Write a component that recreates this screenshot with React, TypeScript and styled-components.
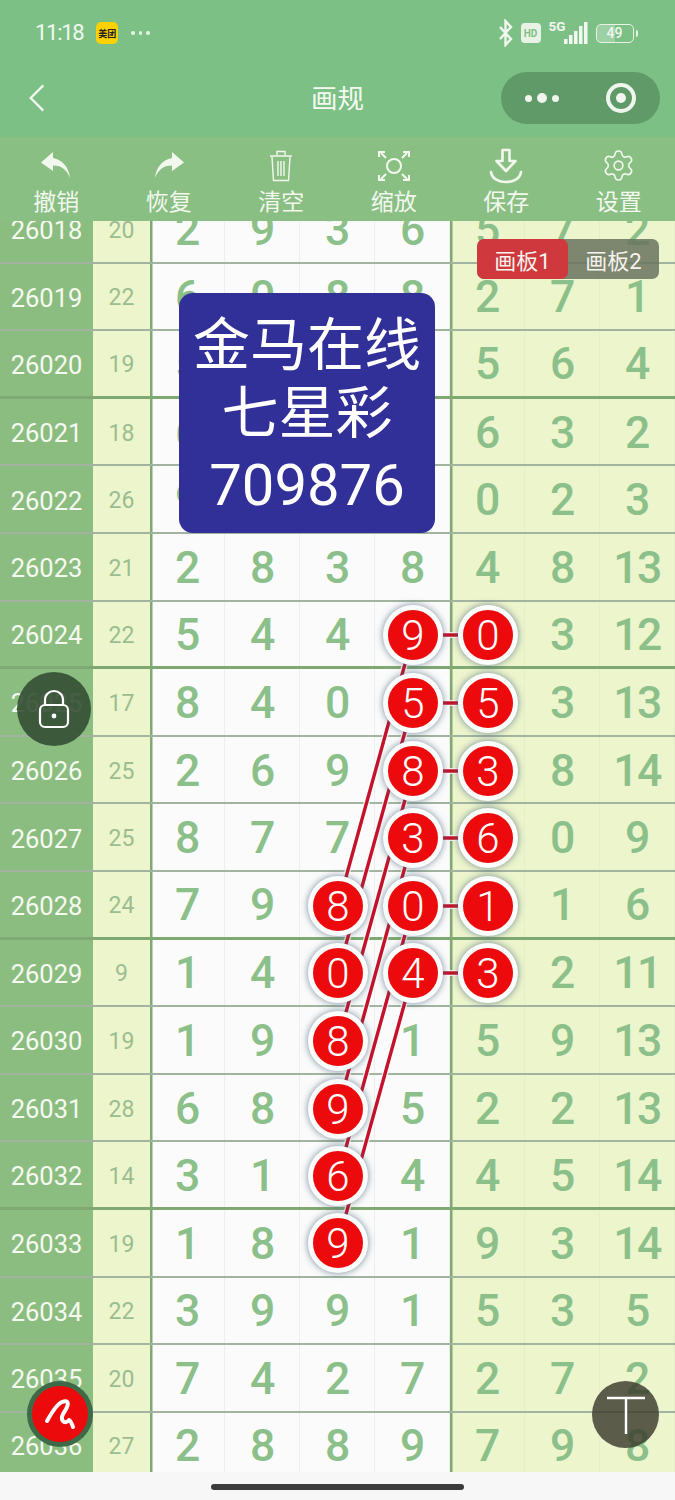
import styled, { createGlobalStyle } from "styled-components";
import { Settings } from "lucide-react";

type Mark = { x: number; y: number; value: number };

const rows: [number, number, (number | string)[]][] = [
  [26018, 20, [2, 9, 3, 6, 5, 7, 2]],
  [26019, 22, [6, 0, 8, 8, 2, 7, 1]],
  [26020, 19, [5, 3, 1, 7, 5, 6, 4]],
  [26021, 18, [6, 2, 4, 0, 6, 3, 2]],
  [26022, 26, [9, 7, 2, 5, 0, 2, 3]],
  [26023, 21, [2, 8, 3, 8, 4, 8, 13]],
  [26024, 22, [5, 4, 4, 9, 0, 3, 12]],
  [26025, 17, [8, 4, 0, 5, 5, 3, 13]],
  [26026, 25, [2, 6, 9, 8, 3, 8, 14]],
  [26027, 25, [8, 7, 7, 3, 6, 0, 9]],
  [26028, 24, [7, 9, 8, 0, 1, 1, 6]],
  [26029, 9, [1, 4, 0, 4, 3, 2, 11]],
  [26030, 19, [1, 9, 8, 1, 5, 9, 13]],
  [26031, 28, [6, 8, 9, 5, 2, 2, 13]],
  [26032, 14, [3, 1, 6, 4, 4, 5, 14]],
  [26033, 19, [1, 8, 9, 1, 9, 3, 14]],
  [26034, 22, [3, 9, 9, 1, 5, 3, 5]],
  [26035, 20, [7, 4, 2, 7, 2, 7, 2]],
  [26036, 27, [2, 8, 8, 9, 7, 9, 8]],
];

const marks: Mark[] = [
  { x: 413, y: 635, value: 9 },
  { x: 488, y: 635, value: 0 },
  { x: 413, y: 703, value: 5 },
  { x: 488, y: 703, value: 5 },
  { x: 413, y: 771, value: 8 },
  { x: 488, y: 771, value: 3 },
  { x: 413, y: 838, value: 3 },
  { x: 488, y: 838, value: 6 },
  { x: 338, y: 906, value: 8 },
  { x: 413, y: 906, value: 0 },
  { x: 488, y: 906, value: 1 },
  { x: 338, y: 973, value: 0 },
  { x: 413, y: 973, value: 4 },
  { x: 488, y: 973, value: 3 },
  { x: 338, y: 1041, value: 8 },
  { x: 338, y: 1109, value: 9 },
  { x: 338, y: 1176, value: 6 },
  { x: 338, y: 1243, value: 9 },
];

// joins between marks: slanted ones first, then the short ones across a row
const links = [
  [413, 635, 338, 906],
  [413, 703, 338, 973],
  [413, 771, 338, 1041],
  [413, 838, 338, 1109],
  [413, 906, 338, 1176],
  [413, 973, 338, 1243],
  [413, 635, 488, 635],
  [413, 703, 488, 703],
  [413, 771, 488, 771],
  [413, 838, 488, 838],
  [413, 906, 488, 906],
  [413, 973, 488, 973],
];

const tools = ["撤销", "恢复", "清空", "缩放", "保存", "设置"];

const ToolGlyph = ({ name }: { name: string }) => {
  switch (name) {
    case "撤销":
      return (
        <ToolSvg viewBox="0 0 36 36">
          <path
            d="M15 4 3 14.500 15 23v-5.500c7 0 13 2.500 17 12.500-1-10-7-18-17-20z"
            fill="currentColor"
            stroke="none"
          />
        </ToolSvg>
      );
    case "恢复":
      return (
        <ToolSvg viewBox="0 0 36 36">
          <path
            d="M21 4l12 10.500L21 23v-5.500C14 17.500 8 20 4 30c1-10 7-18 17-20z"
            fill="currentColor"
            stroke="none"
          />
        </ToolSvg>
      );
    case "清空":
      return (
        <ToolSvg viewBox="0 0 36 36" $thin>
          <path d="M7 8h22M14 7V3.500h8V7M9 9l1.500 23.500h15L27 9M15 13v15M18 13v15M21 13v15" />
        </ToolSvg>
      );
    case "缩放":
      return (
        <ToolSvg viewBox="0 0 36 36">
          <circle cx="18" cy="18" r="7" />
          <path d="M3 9V4h6M27 4h6v5M3 27v5h6M27 32h6v-5M5 5l5 5M31 5l-5 5M5 31l5-5M31 31l-5-5" />
        </ToolSvg>
      );
    case "保存":
      return (
        <ToolSvg viewBox="0 0 36 36">
          <path
            d="M14.500 2h7v11h6L18 23 8.500 13h6zM3 24c1 7 8 10 15 10s14-3 15-10"
            strokeLinecap="round"
            strokeLinejoin="round"
            strokeWidth="2.600"
          />
        </ToolSvg>
      );
    default:
      return <Settings size={35} strokeWidth={1.1} />;
  }
};

const App = () => (
  <Page>
    <GlobalStyle />
    <StatusBar>
      <StatusLeft>
        <Time>11:18</Time>
        <AppBadge>美团</AppBadge>
        <MoreDots>
          <i />
          <i />
          <i />
        </MoreDots>
      </StatusLeft>
      <StatusRight>
        <StatusSvg width="16" height="28" viewBox="0 0 16 28">
          <path d="M2 8l11 12-5.500 6V2L13 8 2 20" fill="none" stroke="#f1f8ef" strokeWidth="2.400" />
        </StatusSvg>
        <HdBadge>HD</HdBadge>
        <Network>
          <NetworkLabel>5G</NetworkLabel>
          <StatusSvg width="24" height="24" viewBox="0 0 24 24">
            <path d="M0 18h3.500v5H0zM5 14h3.500v9H5zM10 10h3.500v13H10zM15 5h3.500v18H15zM20 1h3.500v22H20z" fill="#f1f8ef" />
          </StatusSvg>
        </Network>
        <Battery>49</Battery>
        <BatteryTip />
      </StatusRight>
    </StatusBar>

    <NavBar>
      <BackButton viewBox="0 0 20 34" aria-hidden="true">
        <path d="M17 3 3 17l14 14" />
      </BackButton>
      <NavTitle>画规</NavTitle>
      <Capsule>
        <CapsuleDots>
          <Dot $size={7} />
          <Dot $size={10} />
          <Dot $size={7} />
        </CapsuleDots>
        <CapsuleTarget />
      </Capsule>
    </NavBar>

    <Toolbar>
      {tools.map((label) => (
        <Tool key={label}>
          <ToolIcon>
            <ToolGlyph name={label} />
          </ToolIcon>
          <ToolLabel>{label}</ToolLabel>
        </Tool>
      ))}
    </Toolbar>

    <Board>
      <Table>
        {rows.map(([id, sum, cells]) => {
          const heavy = (id - 26020) % 4 === 0;
          return (
            <Row key={id} $heavy={heavy}>
              <IdCell>{id}</IdCell>
              <SumCell>{sum}</SumCell>
              <Group>
                {cells.slice(0, 4).map((value, i) => (
                  <Digit key={i}>{value}</Digit>
                ))}
              </Group>
              <Group $tinted>
                {cells.slice(4).map((value, i) => (
                  <Digit key={i}>{value}</Digit>
                ))}
              </Group>
            </Row>
          );
        })}
      </Table>
    </Board>

    <HomeBar>
      <HomeHandle />
    </HomeBar>

    <Links viewBox="0 0 675 1500" aria-hidden="true">
      {links.map(([x1, y1, x2, y2], i) => (
        <g key={i}>
          <line x1={x1} y1={y1} x2={x2} y2={y2} stroke="#ffffff" strokeOpacity="0.8" strokeWidth="6" />
          <line x1={x1} y1={y1} x2={x2} y2={y2} stroke="#c4122a" strokeWidth="3.400" />
        </g>
      ))}
    </Links>
    {marks.map((mark, i) => (
      <MarkBall key={i} style={{ left: mark.x - 30, top: mark.y - 30 }}>
        {mark.value}
      </MarkBall>
    ))}

    <BoardTabs>
      <BoardTab $active>画板1</BoardTab>
      <BoardTab>画板2</BoardTab>
    </BoardTabs>

    <InfoCard>
      <div>金马在线</div>
      <div>七星彩</div>
      <InfoNumber>709876</InfoNumber>
    </InfoCard>

    <LockButton>
      <svg width="32" height="40" viewBox="0 0 32 40" fill="none" stroke="#fff" strokeWidth="2.200">
        <path d="M7 17V11C7 5.500 11 2 16 2s9 3.500 9 9v6" />
        <rect x="2" y="16" width="28" height="22" rx="5" />
        <circle cx="16" cy="27" r="2.400" fill="#fff" stroke="none" />
      </svg>
    </LockButton>

    <PenButton>
      <svg width="34" height="34" viewBox="0 0 34 34" fill="none" stroke="#fff" strokeWidth="4" strokeLinecap="round" strokeLinejoin="round">
        <path d="M4 24C9 15 14 7 19 5c5-2 7 0 5 5-2 5-6 8-5 12 1 4 5 4 7 1 2 1 3 4 4 7" />
      </svg>
    </PenButton>

    <TextButton>
      <svg width="42" height="40" viewBox="0 0 42 40" fill="none" stroke="#fff" strokeWidth="2.400">
        <path d="M2 3h38M21 3v36" />
      </svg>
    </TextButton>
  </Page>
);

const GlobalStyle = createGlobalStyle`
  html, body {
    margin: 0;
    padding: 0;
    background: #f7f7f7;
  }
  body {
    font-family: Roboto, "Noto Sans CJK SC", sans-serif;
  }
`;

const Page = styled.div`
  position: relative;
  width: 675px;
  height: 1500px;
  overflow: hidden;
  display: flex;
  flex-direction: column;
  background: #7cc086;
`;

const StatusBar = styled.div`
  height: 59px;
  flex: none;
  display: flex;
  align-items: flex-start;
  justify-content: space-between;
  padding: 19px 37px 0 35px;
  box-sizing: border-box;
  color: #f1f8ef;
`;

const StatusLeft = styled.div`
  display: flex;
  align-items: center;
  gap: 13px;
  height: 28px;
`;

const Time = styled.span`
  font-size: 22px;
  letter-spacing: -1.300px;
  line-height: 28px;
`;

const AppBadge = styled.span`
  width: 22px;
  height: 22px;
  border-radius: 5px;
  background: #fdd000;
  color: #222;
  font-size: 9px;
  font-weight: 700;
  display: flex;
  align-items: center;
  justify-content: center;
  white-space: nowrap;
  overflow: hidden;
`;

const MoreDots = styled.span`
  display: flex;
  gap: 4px;

  i {
    width: 3.500px;
    height: 3.500px;
    border-radius: 50%;
    background: #e3f1df;
  }
`;

const StatusRight = styled.div`
  display: flex;
  align-items: center;
  height: 28px;
`;

const StatusSvg = styled.svg`
  display: block;
  flex: none;
`;

const HdBadge = styled.span`
  width: 20px;
  height: 20px;
  margin-left: 7px;
  border-radius: 4px;
  background: #e8f3e5;
  color: #7cc086;
  font-size: 10px;
  font-weight: 700;
  display: flex;
  align-items: center;
  justify-content: center;
`;

const Network = styled.div`
  position: relative;
  width: 40px;
  margin-left: 7px;
  display: flex;
  justify-content: flex-end;
`;

const NetworkLabel = styled.span`
  position: absolute;
  left: 1px;
  top: -2px;
  font-size: 13.500px;
  font-weight: 700;
  line-height: 14px;
`;

const Battery = styled.span`
  width: 38px;
  height: 19px;
  margin-left: 8px;
  box-sizing: border-box;
  border: 1.500px solid #e8f3e5;
  border-radius: 5px;
  background: linear-gradient(90deg, rgba(255, 255, 255, 0.25) 49%, transparent 49%);
  font-size: 14px;
  font-weight: 500;
  line-height: 16px;
  text-align: center;
`;

const BatteryTip = styled.span`
  width: 2.500px;
  height: 7px;
  margin-left: 2px;
  border-radius: 0 2px 2px 0;
  background: #e8f3e5;
`;

const NavBar = styled.div`
  position: relative;
  height: 78px;
  flex: none;
  display: flex;
  align-items: center;
  justify-content: space-between;
  padding: 0 15px 0 28px;
  box-sizing: border-box;
`;

const BackButton = styled.svg`
  width: 18px;
  height: 32px;
  fill: none;
  stroke: #f4faf2;
  stroke-width: 2.500;
`;

const NavTitle = styled.div`
  position: absolute;
  left: 0;
  right: 0;
  padding-top: 2px;
  text-align: center;
  color: #f4faf2;
  font-size: 26.500px;
  line-height: 34px;
`;

const Capsule = styled.div`
  width: 159px;
  height: 52px;
  border-radius: 26px;
  background: #5f9a68;
  display: flex;
  align-items: center;
  justify-content: space-between;
  padding: 0 24px;
  box-sizing: border-box;
`;

const CapsuleDots = styled.div`
  display: flex;
  align-items: center;
  gap: 5px;
`;

const Dot = styled.span<{ $size: number }>`
  width: ${({ $size }) => $size}px;
  height: ${({ $size }) => $size}px;
  border-radius: 50%;
  background: #f0f6ee;
`;

const CapsuleTarget = styled.span`
  width: 30px;
  height: 30px;
  box-sizing: border-box;
  border: 4px solid #f0f6ee;
  border-radius: 50%;
  display: flex;
  align-items: center;
  justify-content: center;

  &::after {
    content: "";
    width: 10px;
    height: 10px;
    border-radius: 50%;
    background: #f0f6ee;
  }
`;

const Toolbar = styled.div`
  height: 84px;
  flex: none;
  display: grid;
  grid-template-columns: repeat(6, 112.500px);
  background: #8abf84;
`;

const Tool = styled.div`
  display: flex;
  flex-direction: column;
  align-items: center;
  color: #f2f8ee;
`;

const ToolIcon = styled.div`
  height: 47px;
  padding-top: 11px;
  box-sizing: border-box;
  display: flex;
  align-items: flex-start;
  justify-content: center;
`;

const ToolSvg = styled.svg<{ $thin?: boolean }>`
  width: 36px;
  height: 36px;
  fill: none;
  stroke: currentColor;
  stroke-width: ${({ $thin }) => ($thin ? 1.4 : 2)};
`;

const ToolLabel = styled.div`
  font-size: 23px;
  line-height: 32px;
  font-family: "Noto Sans CJK SC", sans-serif;
`;

const Board = styled.div`
  height: 1251px;
  flex: none;
  overflow: hidden;
  background: #fbfbfb;
`;

const Table = styled.div`
  margin-top: -25px;
  display: flex;
  flex-direction: column;
`;

const Row = styled.div<{ $heavy: boolean }>`
  height: 67.600px;
  box-sizing: border-box;
  flex: none;
  display: grid;
  grid-template-columns: 93px 57px 300px 225px;
  border-bottom: ${({ $heavy }) => ($heavy ? "3px solid #7fa873" : "2px solid #a2b3a0")};
`;

const IdCell = styled.div`
  padding-top: 3px;
  background: #8cbd80;
  color: #f5faf0;
  font-size: 25.500px;
  display: flex;
  align-items: center;
  justify-content: center;
`;

const SumCell = styled.div`
  padding-top: 3px;
  background: #edf5cd;
  color: #9bbd8f;
  font-size: 23px;
  display: flex;
  align-items: center;
  justify-content: center;
`;

const Group = styled.div<{ $tinted?: boolean }>`
  display: grid;
  grid-template-columns: repeat(${({ $tinted }) => ($tinted ? 3 : 4)}, 75px);
  background: ${({ $tinted }) => ($tinted ? "#edf5cd" : "#fbfbfb")};
  box-shadow: inset 2.500px 0 0 #7fa873;

  & > div {
    border-right: 1.500px solid ${({ $tinted }) => ($tinted ? "#e5eec6" : "#eeeeee")};
  }
`;

const Digit = styled.div`
  padding-top: 2px;
  color: #8cc08a;
  font-size: 44.500px;
  font-weight: 500;
  letter-spacing: -1.500px;
  display: flex;
  align-items: center;
  justify-content: center;
`;

const HomeBar = styled.div`
  flex: 1;
  background: #f7f7f7;
  display: flex;
  align-items: center;
  justify-content: center;
`;

const HomeHandle = styled.div`
  width: 253px;
  height: 6px;
  margin-top: 1px;
  border-radius: 3px;
  background: #3c3c3c;
`;

const Links = styled.svg`
  position: absolute;
  inset: 0;
  width: 675px;
  height: 1500px;
`;

const MarkBall = styled.div`
  position: absolute;
  width: 60px;
  height: 60px;
  box-sizing: border-box;
  border: 5px solid #fbfdfd;
  border-radius: 50%;
  background: #ec0a0c;
  box-shadow: 0 0 7px rgba(70, 100, 120, 0.75);
  color: #fff;
  font-size: 42px;
  font-weight: 300;
  display: flex;
  align-items: center;
  justify-content: center;
`;

const BoardTabs = styled.div`
  position: absolute;
  left: 477px;
  top: 239px;
  width: 182px;
  height: 40px;
  display: flex;
  border-radius: 7px;
  overflow: hidden;
  background: rgba(105, 115, 95, 0.85);
`;

const BoardTab = styled.div<{ $active?: boolean }>`
  flex: 1;
  border-radius: 7px;
  background: ${({ $active }) => ($active ? "#cf383c" : "transparent")};
  color: #f6f3ee;
  font-size: 22px;
  display: flex;
  align-items: center;
  justify-content: center;
`;

const InfoCard = styled.div`
  position: absolute;
  left: 179px;
  top: 293px;
  width: 256px;
  height: 240px;
  padding-top: 13px;
  box-sizing: border-box;
  border-radius: 14px;
  background: #303098;
  color: #fff;
  font-family: "Noto Sans CJK SC", sans-serif;
  font-size: 57px;
  line-height: 68px;
  text-align: center;
`;

const InfoNumber = styled.div`
  margin-top: 7px;
  font-family: Roboto, sans-serif;
  font-size: 58px;
  line-height: 72px;
`;

const RoundOverlay = styled.div`
  position: absolute;
  border-radius: 50%;
  display: flex;
  align-items: center;
  justify-content: center;
  box-sizing: border-box;
`;

const LockButton = styled(RoundOverlay)`
  left: 17px;
  top: 672px;
  width: 74px;
  height: 74px;
  background: rgba(52, 78, 52, 0.9);
`;

const PenButton = styled(RoundOverlay)`
  left: 27px;
  top: 1381px;
  width: 66px;
  height: 66px;
  background: #ec0a0c;
  border: 5px solid #3f6a48;
`;

const TextButton = styled(RoundOverlay)`
  left: 592px;
  top: 1381px;
  width: 67px;
  height: 67px;
  background: rgba(58, 60, 45, 0.82);
`;

export default App;
